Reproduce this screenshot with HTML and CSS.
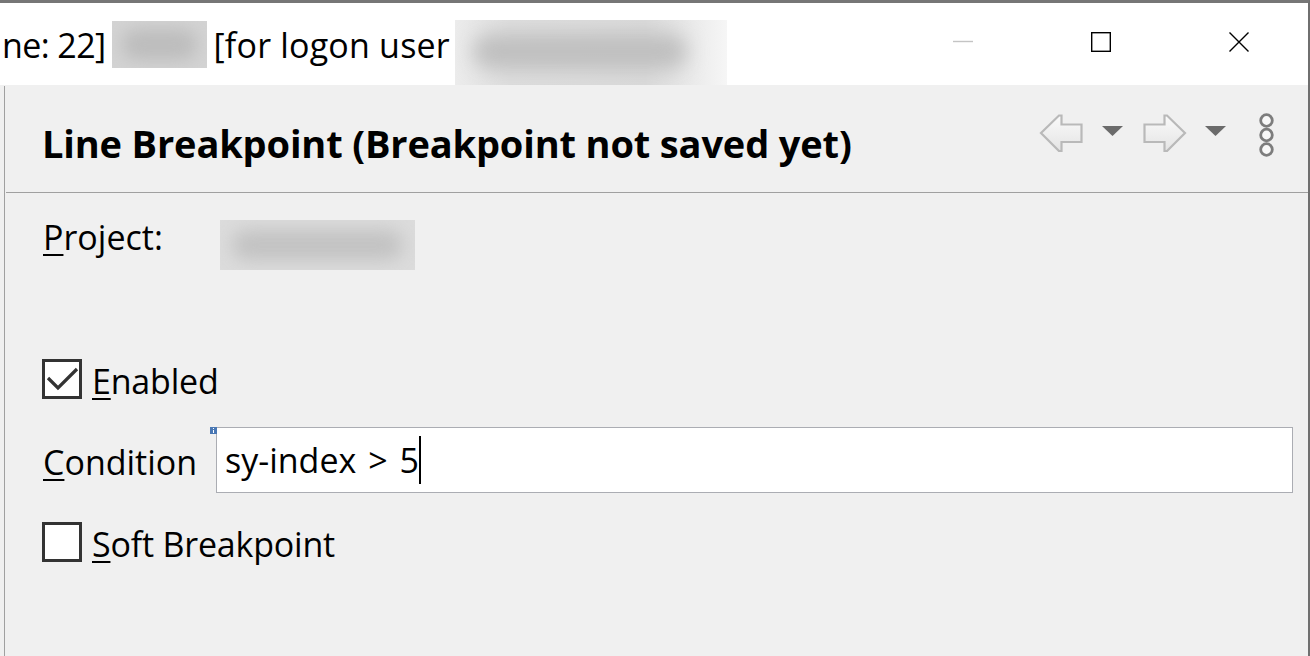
FILE: index.html
```html
<!DOCTYPE html>
<html>
<head>
<meta charset="utf-8">
<link rel="stylesheet" href="styles.css">
</head>
<body>
<div class="window">
  <div class="titlebar">
    <div class="title">
      <span class="ttext t1">ne: 22]</span>
      <span class="redact r1"><span class="smudge"></span></span>
      <span class="ttext t2">[for logon user</span>
      <span class="redact r2"><span class="smudge"></span></span>
    </div>
    <div class="controls">
      <div class="ctl"><svg width="20" height="20" viewBox="0 0 20 20"><line x1="0" y1="9.5" x2="20" y2="9.5" stroke="#c4c4c4" stroke-width="1.4"/></svg></div>
      <div class="ctl"><svg width="20" height="20" viewBox="0 0 20 20"><rect x="0.7" y="0.7" width="18.6" height="18.6" fill="none" stroke="#000" stroke-width="1.4"/></svg></div>
      <div class="ctl"><svg width="20" height="20" viewBox="0 0 20 20"><path d="M0.5 0.5 L19.5 19.5 M19.5 0.5 L0.5 19.5" stroke="#000" stroke-width="1.4"/></svg></div>
    </div>
  </div>
  <div class="body">
    <div class="panel">
      <div class="header">
        <h1 class="heading">Line Breakpoint (Breakpoint not saved yet)</h1>
        <div class="tools">
          <svg class="arrow" width="44" height="38" viewBox="0 0 44 38">
            <defs><linearGradient id="ag" x1="0" y1="0" x2="0" y2="1"><stop offset="0" stop-color="#fafafa"/><stop offset="1" stop-color="#e4e4e4"/></linearGradient></defs>
            <polygon points="2,19 20,1.5 22.5,1.5 22.5,10.5 42.5,10.5 42.5,28 22.5,28 22.5,37 20,37" fill="url(#ag)" stroke="#b9b9b9" stroke-width="2.2" stroke-linejoin="miter"/>
          </svg>
          <svg class="tri" width="21" height="10" viewBox="0 0 21 10"><polygon points="0,0 21,0 10.5,10" fill="#6b6b6b"/></svg>
          <svg class="arrow a2" width="44" height="38" viewBox="0 0 44 38">
            <defs><linearGradient id="ag2" x1="0" y1="0" x2="0" y2="1"><stop offset="0" stop-color="#fafafa"/><stop offset="1" stop-color="#e4e4e4"/></linearGradient></defs>
            <polygon points="42,19 24,1.5 21.5,1.5 21.5,10.5 1.5,10.5 1.5,28 21.5,28 21.5,37 24,37" fill="url(#ag2)" stroke="#b9b9b9" stroke-width="2.2" stroke-linejoin="miter"/>
          </svg>
          <svg class="tri t2" width="21" height="10" viewBox="0 0 21 10"><polygon points="0,0 21,0 10.5,10" fill="#6b6b6b"/></svg>
          <svg class="dots" width="17" height="44" viewBox="0 0 17 44">
            <circle cx="8.5" cy="7.5" r="5.8" fill="#f8f8f8" stroke="#7d7d7d" stroke-width="2.8"/>
            <circle cx="8.5" cy="22" r="5.8" fill="#f8f8f8" stroke="#7d7d7d" stroke-width="2.8"/>
            <circle cx="8.5" cy="36.5" r="5.8" fill="#f8f8f8" stroke="#7d7d7d" stroke-width="2.8"/>
          </svg>
        </div>
      </div>
      <div class="form">
        <div class="row project">
          <span class="label"><u>P</u>roject:</span>
          <span class="redact r3"><span class="smudge"></span></span>
        </div>
        <div class="row check enabled">
          <span class="box"><svg width="34" height="34" viewBox="0 0 34 34"><polyline points="3,16 13,26 32,7" fill="none" stroke="#333" stroke-width="3.2"/></svg></span>
          <span class="clabel"><u>E</u>nabled</span>
        </div>
        <div class="row condition">
          <span class="label"><u>C</u>ondition</span>
          <div class="field">
            <svg class="info" width="7" height="7" viewBox="0 0 7 7"><rect width="7" height="7" fill="#4a78b4"/><rect x="3" y="1" width="1" height="1" fill="#fff"/><rect x="3" y="3" width="1" height="3" fill="#fff"/></svg>
            <span class="value">sy-index &gt; 5</span><span class="caret"></span>
          </div>
        </div>
        <div class="row check soft">
          <span class="box"></span>
          <span class="clabel"><u>S</u>oft Breakpoint</span>
        </div>
      </div>
    </div>
  </div>
</div>
</body>
</html>
```
FILE: styles.css
```css
html, body {
  margin: 0;
  padding: 0;
  width: 1310px;
  height: 656px;
  overflow: hidden;
  background: #ffffff;
}

body {
  font-family: "Open Sans", "Noto Sans", sans-serif;
  color: #000;
}

.window {
  width: 1310px;
  height: 656px;
  box-sizing: border-box;
  border-top: 3px solid #767676;
  border-right: 2px solid #6f6f6f;
  display: flex;
  flex-direction: column;
}

.titlebar {
  flex: none;
  height: 82px;
  background: #fff;
  display: flex;
  justify-content: space-between;
}

.title {
  display: flex;
  align-items: flex-start;
  white-space: nowrap;
  font-size: 34px;
  overflow: hidden;
}

.ttext {
  margin-top: 19px;
  line-height: 46px;
}

.t1 {
  margin-left: 2px;
  letter-spacing: -0.6px;
}

.t2 {
  margin-left: 7px;
  letter-spacing: 0.2px;
}

.redact {
  position: relative;
  display: block;
  overflow: hidden;
  background: #d6d6d6;
}

.smudge {
  position: absolute;
  inset: 8px 10px;
  background: #bdbdbd;
  filter: blur(8px);
  border-radius: 20px;
}

.r1 {
  margin-left: 6px;
  margin-top: 18px;
  width: 95px;
  height: 47px;
  background: #d3d3d3;
}

.r2 {
  margin-left: 5px;
  margin-top: 17px;
  width: 272px;
  height: 65px;
  background: linear-gradient(90deg, #ececec 0%, #dedede 20%, #dadada 70%, #f6f6f6 100%);
}

.r2 .smudge {
  inset: 14px 40px 16px 18px;
  background: #bfbfbf;
  filter: blur(10px);
}

.controls {
  display: flex;
}

.ctl {
  width: 138px;
  height: 82px;
  display: flex;
  justify-content: center;
  align-items: flex-start;
  padding-top: 29px;
  box-sizing: border-box;
}

.ctl svg {
  display: block;
}

.body {
  flex: 1;
  background: #f0f0f0;
  padding-left: 4px;
  display: flex;
}

.panel {
  flex: 1;
  border-left: 1px solid #a0a0a0;
  margin-top: 1px;
  display: flex;
  flex-direction: column;
}

.header {
  flex: none;
  height: 106px;
  border-bottom: 1px solid #a0a0a0;
  margin-left: 1px;
  display: flex;
  justify-content: space-between;
  align-items: flex-start;
}

.heading {
  margin: 0;
  padding-left: 36px;
  padding-top: 32px;
  font-size: 38px;
  font-weight: 700;
  line-height: 50px;
  white-space: nowrap;
  letter-spacing: -0.15px;
}

.tools {
  display: flex;
  align-items: flex-start;
  margin-top: 27px;
  padding-right: 33px;
}

.tools svg {
  display: block;
}

.arrow {
  margin-top: 1px;
}

.tri {
  margin-left: 19px;
  margin-top: 13px;
}

.a2 {
  margin-left: 20px;
}

.tri.t2 {
  margin-left: 18px;
}

.dots {
  margin-left: 32px;
}

.form {
  padding: 21px 15px 0 38px;
  font-size: 34px;
  display: flex;
  flex-direction: column;
}

.row {
  display: flex;
  align-items: flex-start;
}

.label {
  width: 173px;
  flex: none;
  line-height: 46px;
  white-space: nowrap;
}

.label u, .clabel u {
  text-decoration-thickness: 2px;
  text-underline-offset: 4px;
}

.r3 {
  margin-left: 4px;
  margin-top: 6px;
  width: 195px;
  height: 50px;
  background: #dcdcdc;
}

.r3 .smudge {
  inset: 10px 12px;
  background: #c2c2c2;
  filter: blur(9px);
}

.check {
  align-items: flex-start;
}

.box {
  width: 40px;
  height: 40px;
  box-sizing: border-box;
  border: 3px solid #333;
  background: #fff;
  margin-left: -1px;
  flex: none;
  display: flex;
  align-items: center;
  justify-content: center;
}

.box svg {
  display: block;
}

.clabel {
  margin-left: 10px;
  line-height: 44px;
  white-space: nowrap;
  letter-spacing: -0.2px;
}

.enabled {
  margin-top: 89px;
}

.condition {
  margin-top: 24px;
  align-items: center;
}

.condition .label {
  padding-top: 3px;
}

.field {
  position: relative;
  flex: 1;
  height: 66px;
  box-sizing: border-box;
  border: 1px solid #abadb3;
  background: #fff;
  display: flex;
  align-items: center;
  padding-left: 8px;
}

.info {
  position: absolute;
  left: -7px;
  top: -1px;
  display: block;
}

.value {
  line-height: 46px;
  white-space: pre;
  word-spacing: 3px;
}

.caret {
  display: block;
  width: 2px;
  height: 48px;
  background: #000;
  margin-left: 0;
}

.soft {
  margin-top: 29px;
}
```
